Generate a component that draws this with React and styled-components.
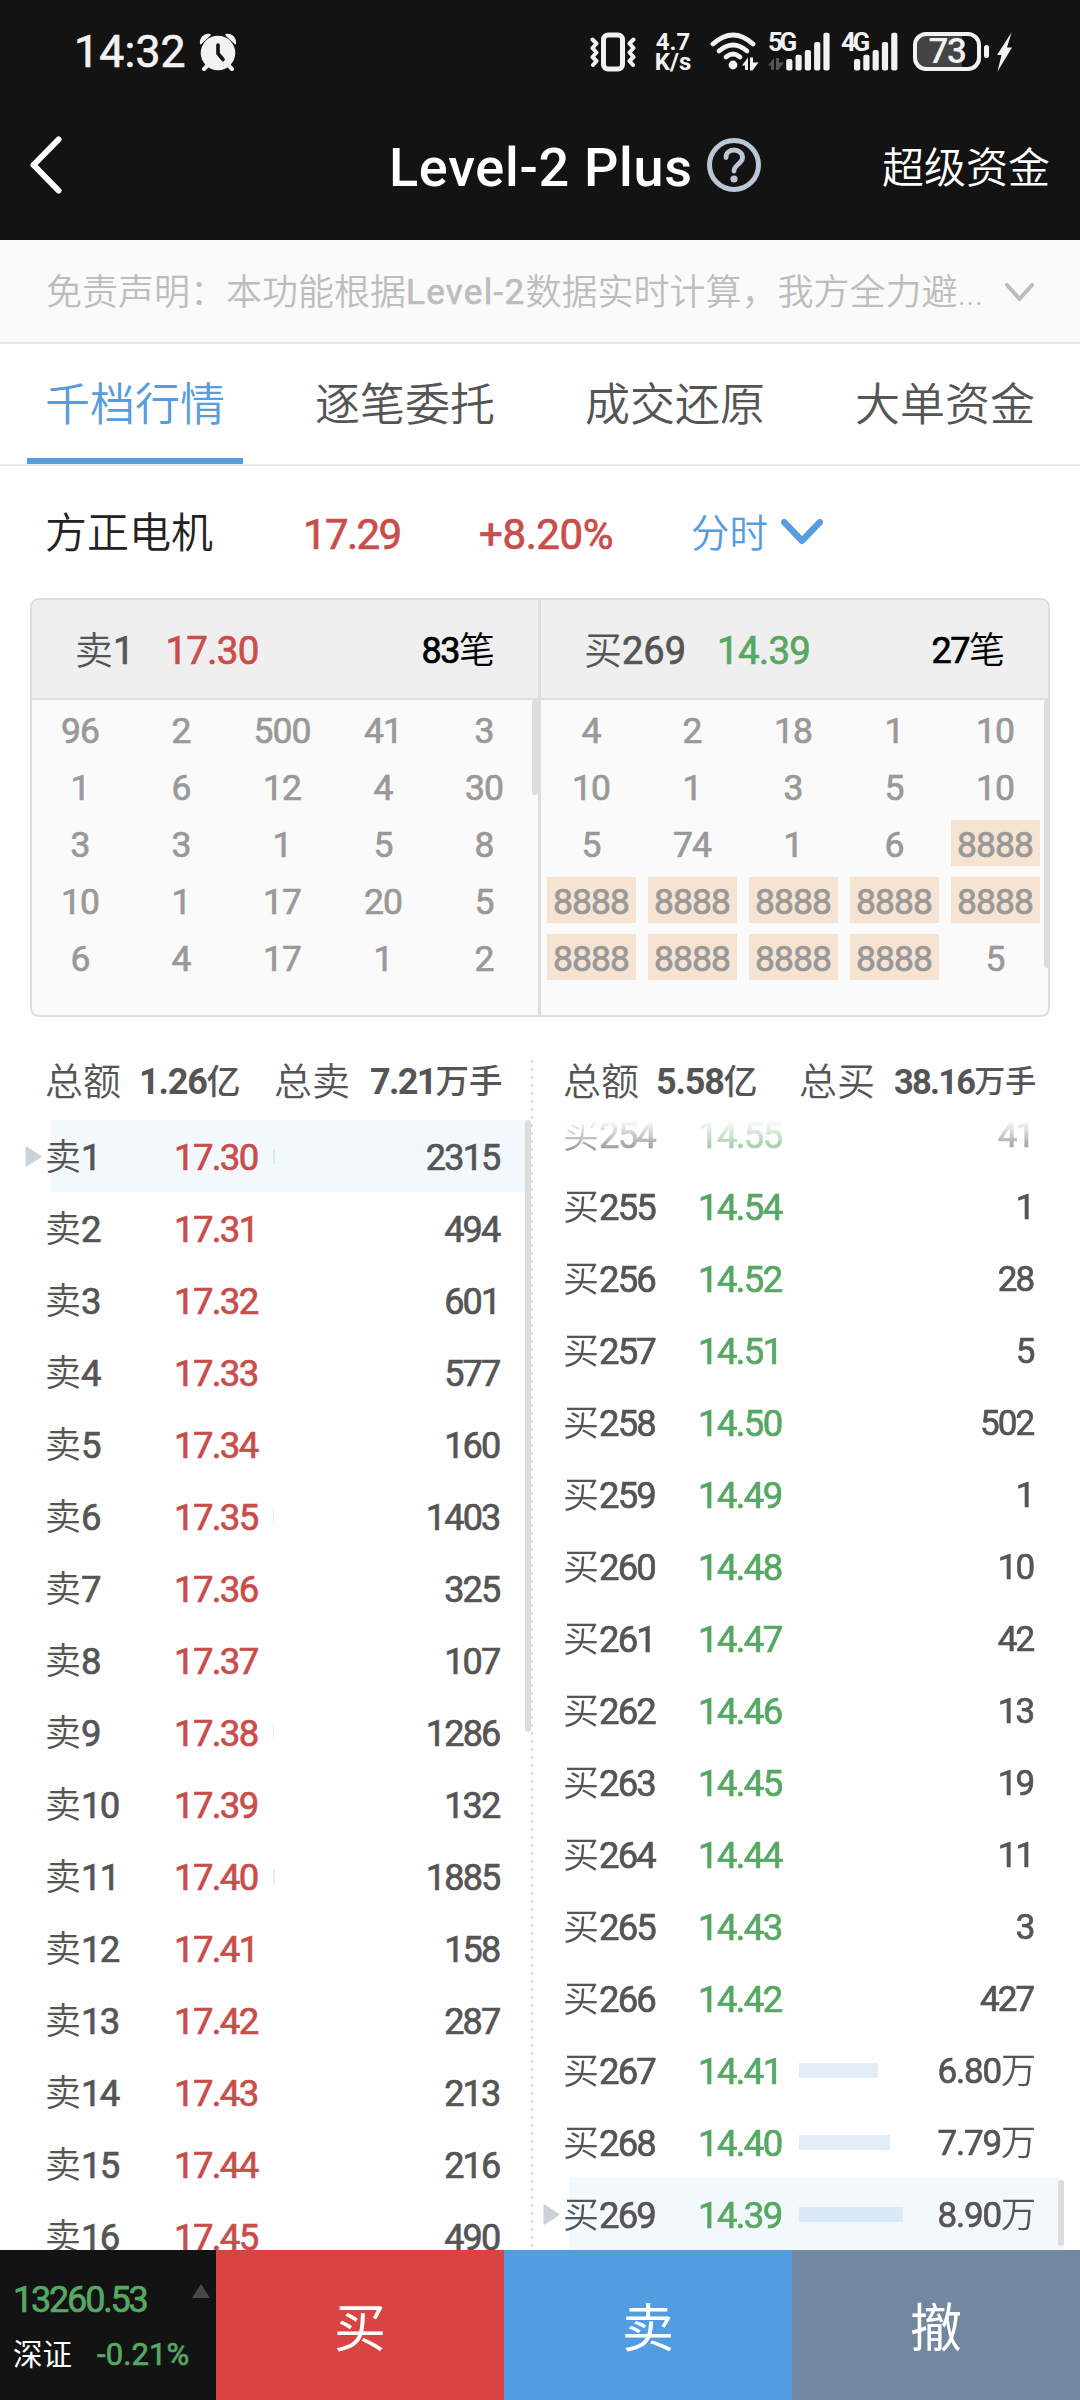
import React from "react";
import styled, { createGlobalStyle } from "styled-components";

const RED = "#c94d4a";
const GREEN = "#56a863";
const BLUE = "#569cde";
const GREY = "#555555";
const LINE = "#dddddd";
const DARK = "#131313";

const GlobalStyle = createGlobalStyle`
  * { box-sizing: border-box; }
  body {
    margin: 0;
    background: #ffffff;
    font-family: Roboto, "Noto Sans CJK SC", sans-serif;
    color: ${GREY};
  }
`;

const Screen = styled.div`
  width: 1080px;
  height: 2400px;
  display: flex;
  flex-direction: column;
  overflow: hidden;
  background: #fefefe;
`;

const Cjk = styled.span`
  font-family: Roboto, "Noto Sans CJK SC", sans-serif;
  font-size: ${(p) => p.$size}px;
  font-weight: ${(p) => p.$weight || 350};
  line-height: 48px;
  color: ${(p) => p.$color || "inherit"};
  white-space: nowrap;
`;

const Num = styled.span`
  font-family: Roboto, sans-serif;
  font-size: ${(p) => p.$size}px;
  font-weight: ${(p) => p.$weight || 400};
  -webkit-text-stroke: ${(p) => (p.$weight ? 0 : 0.7)}px currentColor;
  letter-spacing: ${(p) => p.$track || 0}px;
  line-height: 48px;
  color: ${(p) => p.$color || "inherit"};
  white-space: nowrap;
`;

/* ---------- status bar ---------- */

const StatusBar = styled.div`
  height: 102px;
  flex: none;
  background: ${DARK};
  color: #f2f2f2;
  display: flex;
  align-items: center;
  padding: 1px 68px 0 74px;
`;

const StatusGroup = styled.div`
  display: flex;
  align-items: center;
  margin-left: ${(p) => p.$left || 0}px;
`;

const Speed = styled.div`
  display: flex;
  flex-direction: column;
  align-items: center;
  width: 40px;
  margin-left: 17px;
  margin-right: 1px;
  font: 700 24px/20px Roboto, sans-serif;
`;

const Signal = styled.div`
  display: flex;
  width: 64px;
  height: 40px;
  position: relative;
  margin-left: ${(p) => p.$left}px;
`;

const NetLabel = styled.span`
  position: absolute;
  left: 0;
  top: 0;
  font: 700 26px/20px Roboto, sans-serif;
  letter-spacing: -3.5px;
`;

const Battery = styled.div`
  width: 68px;
  height: 39px;
  margin-left: 8px;
  border: 4px solid #f2f2f2;
  border-radius: 13px;
  background: linear-gradient(90deg, #444444 45px, ${DARK} 45px);
  display: flex;
  align-items: center;
  justify-content: center;
  font: 500 35px/32px Roboto, sans-serif;
  letter-spacing: -1.5px;
`;

const BatteryTip = styled.div`
  width: 5px;
  height: 13px;
  margin-left: 3px;
  border-radius: 3px;
  background: #f2f2f2;
`;

const AlarmIcon = () => (
  <svg width="38" height="38" viewBox="0 0 38 38" fill="none">
    <path d="M10 31 5 36M28 31l5 5" stroke="#f2f2f2" strokeWidth="4" strokeLinecap="round" />
    <path d="M1 11C0 5 5 0 11 1C12 1 12 2 11 3L3 10.500Q1.500 12 1 11z" fill="#f2f2f2" />
    <path d="M37 11C38 5 33 0 27 1C26 1 26 2 27 3L35 10.500Q36.500 12 37 11z" fill="#f2f2f2" />
    <circle cx="19" cy="20" r="17.300" fill="#f2f2f2" />
    <path d="M19 12v8.500l5 6" stroke={DARK} strokeWidth="3.600" strokeLinecap="round" strokeLinejoin="round" />
  </svg>
);

const VibrateIcon = () => (
  <svg width="46" height="40" viewBox="0 0 46 40" fill="none" stroke="#f2f2f2" strokeLinecap="round" strokeLinejoin="round">
    <rect x="13.500" y="3" width="19" height="34" rx="4.500" strokeWidth="5" />
    <path d="M2.500 7.500 6.500 11.500 2.500 16 6.500 20.500 2.500 25 6.500 29 3 33" strokeWidth="4" />
    <path d="M43.500 7.500 39.500 11.500 43.500 16 39.500 20.500 43.500 25 39.500 29 43 33" strokeWidth="4" />
  </svg>
);

const WifiIcon = () => (
  <svg width="50" height="40" viewBox="0 0 50 40" fill="none" stroke="#f2f2f2" strokeLinecap="round">
    <path d="M3 12Q23 -6 43 12" strokeWidth="4.800" />
    <path d="M9 19Q23 7 37 19" strokeWidth="4.800" />
    <path d="M16 25Q23 19 30 25" strokeWidth="4.800" />
    <circle cx="23" cy="33" r="4.400" fill="#f2f2f2" stroke="none" />
    <path d="M32 33.500l6-8v12.500h-3v-4.500zM40 25.500h3v5h5.500L42.500 38.500h-2.500z" fill="#f2f2f2" stroke="none" />
  </svg>
);

const SignalIcon = ({ left, dim }) => (
  <svg width="64" height="40" viewBox="0 0 64 40">
    {dim && <path d="M0 33.500 6 26v12H3v-4.500zM8 26h3v4.500h5L10 38H8z" fill="#555555" />}
    {[27, 22.7, 18, 10, 0.7].map((top, i) => (
      <rect key={i} x={left + i * 9.3} y={top} width="6.200" height={38.6 - top} rx="2" fill="#f2f2f2" />
    ))}
  </svg>
);

const BoltIcon = () => (
  <svg width="15" height="40" viewBox="0 0 15 40" style={{ marginLeft: 8 }}>
    <path d="M14.500 .5 0 23h4.500L.5 39.500 15 15.500H10z" fill="#f2f2f2" />
  </svg>
);

/* ---------- title bar ---------- */

const TitleBar = styled.header`
  height: 138px;
  flex: none;
  background: ${DARK};
  color: #ffffff;
  display: flex;
  align-items: center;
  padding: 0 30px 12px 29px;
`;

const BackIcon = () => (
  <svg width="34" height="58" viewBox="0 0 34 58" fill="none">
    <path d="M29.500 3.500 4.500 29 29.500 54.500" stroke="#ffffff" strokeWidth="6" strokeLinecap="round" strokeLinejoin="round" />
  </svg>
);

const Title = styled.h1`
  margin: 6px 0 0 326px;
  width: 305px;
  font: 500 54px/60px Roboto, sans-serif;
  letter-spacing: 0.7px;
  white-space: nowrap;
`;

const HelpIcon = () => (
  <svg width="56" height="56" viewBox="0 0 56 56" fill="none" style={{ marginLeft: 12 }}>
    <circle cx="28" cy="28" r="24.500" stroke="#bcc7d6" strokeWidth="5" />
    <path d="M20 20.500C20 16 23.500 13 28 13S36.500 16 36.500 20.500C36.500 26.500 28 27.500 28 34" stroke="#bcc7d6" strokeWidth="4.800" strokeLinecap="round" />
    <circle cx="28" cy="42" r="3.600" fill="#bcc7d6" />
  </svg>
);

const TitleAction = styled.div`
  margin-left: auto;
  font: 400 42px/48px "Noto Sans CJK SC", sans-serif;
  font-weight: 350;
`;

/* ---------- disclaimer and tabs ---------- */

const Disclaimer = styled.div`
  height: 104px;
  flex: none;
  background: #fafafa;
  border-bottom: 2px solid #e8e8e8;
  display: flex;
  align-items: center;
  padding: 3px 46px 0;
  color: #bdbdbd;
`;

const Chevron = ({ w, h, stroke, color, left }) => (
  <svg width={w} height={h} viewBox={`0 0 ${w} ${h}`} fill="none" style={{ marginLeft: left }}>
    <path
      d={`M${stroke / 2} ${stroke / 2}L${w / 2} ${h - stroke / 2 - 1}L${w - stroke / 2} ${stroke / 2}`}
      stroke={color}
      strokeWidth={stroke}
      strokeLinecap="round"
      strokeLinejoin="round"
    />
  </svg>
);

const Tabs = styled.nav`
  height: 122px;
  flex: none;
  display: flex;
  border-bottom: 2px solid #e8e8e8;
`;

const Tab = styled.div`
  width: 216px;
  margin: 0 27px;
  border-bottom: 6px solid ${(p) => (p.$active ? BLUE : "transparent")};
  color: ${(p) => (p.$active ? BLUE : GREY)};
  display: flex;
  align-items: center;
  justify-content: center;
  padding-top: 10px;
`;

/* ---------- stock summary ---------- */

const StockRow = styled.section`
  height: 132px;
  flex: none;
  display: flex;
  align-items: center;
  padding-left: 45px;
`;

const Cell = styled.div`
  width: ${(p) => p.$width}px;
  flex: none;
  display: flex;
  align-items: center;
  padding-top: ${(p) => p.$drop || 0}px;
`;

/* ---------- order queue card ---------- */

const QueueCard = styled.section`
  height: 419px;
  flex: none;
  margin: 0 30px;
  border: 2px solid ${LINE};
  border-radius: 9px;
  background: #fafafa;
  display: flex;
`;

const Queue = styled.div`
  position: relative;
  width: ${(p) => p.$width}px;
  border-left: ${(p) => (p.$divided ? 3 : 0)}px solid ${LINE};
`;

const QueueHead = styled.div`
  height: 100px;
  background: #efefef;
  border-bottom: 2px solid ${LINE};
  border-radius: ${(p) => (p.$right ? "0 7px 0 0" : "7px 0 0 0")};
  display: flex;
  align-items: center;
  padding: 3px 43px 0;
`;

const QueuePrice = styled(Num)`
  margin-left: 31px;
`;

const QueueGrid = styled.div`
  display: grid;
  grid-template-columns: repeat(5, 101px);
  grid-auto-rows: 57px;
  place-items: center;
  margin-left: ${(p) => p.$left}px;
`;

const Lot = styled.div`
  width: 89px;
  height: 46px;
  background: ${(p) => (p.$hot ? "#f7e3d1" : "transparent")};
  color: #999999;
  font: 400 35.5px/51px Roboto, sans-serif;
  -webkit-text-stroke: 0.7px currentColor;
  letter-spacing: -1px;
  text-indent: -1px;
  text-align: center;
`;

const ScrollThumb = styled.div`
  position: absolute;
  top: ${(p) => p.$top}px;
  right: ${(p) => p.$right}px;
  width: 6px;
  height: ${(p) => p.$height}px;
  border-radius: 3px;
  background: #dcdcdc;
`;

/* ---------- depth book ---------- */

const Book = styled.section`
  height: 1233px;
  flex: none;
  display: flex;
`;

const Side = styled.div`
  position: relative;
  width: ${(p) => p.$width}px;
  display: flex;
  flex-direction: column;
`;

const Totals = styled.div`
  height: 103px;
  flex: none;
  display: flex;
  align-items: center;
  padding: 26px 0 0 ${(p) => p.$left}px;
`;

const Divider = styled.div`
  width: 2px;
  margin-top: 43px;
  background: repeating-linear-gradient(180deg, ${LINE} 0 3px, transparent 3px 8px);
`;

const Rows = styled.div`
  flex: 1;
  overflow: hidden;
  mask-image: ${(p) => (p.$fade ? "linear-gradient(180deg, transparent 0, #000 50px)" : "none")};
`;

const RowShift = styled.div`
  margin-top: ${(p) => p.$offset}px;
`;

const Row = styled.div`
  height: 72px;
  display: flex;
  align-items: center;
  margin-right: ${(p) => p.$right}px;
  padding-right: ${(p) => p.$pad}px;
  background: ${(p) =>
    p.$active ? `linear-gradient(90deg, transparent ${p.$start}px, #f3f8fd ${p.$start}px)` : "transparent"};
`;

const Pointer = styled.div`
  width: ${(p) => p.$width}px;
  flex: none;
  display: flex;
  justify-content: flex-end;
  padding-right: 3px;
`;

const PointerIcon = () => (
  <svg width="17" height="21" viewBox="0 0 17 21">
    <path d="M1.500 1.500 15.500 10.500 1.500 19.500z" fill="#cad2da" stroke="#cad2da" strokeWidth="2" strokeLinejoin="round" />
  </svg>
);

const VolumeBar = styled.div`
  height: 15px;
  background: ${(p) => (p.$active ? "#d9e9f6" : "#e2edf8")};
`;

const Volume = styled.div`
  margin-left: auto;
  display: flex;
  align-items: center;
  padding-top: ${(p) => p.$drop || 0}px;
`;

/* ---------- bottom bar ---------- */

const BottomBar = styled.footer`
  height: 150px;
  flex: none;
  display: flex;
`;

const IndexPanel = styled.div`
  position: relative;
  width: 216px;
  background: ${DARK};
  padding: 25px 0 0 13px;
`;

const IndexLine = styled.div`
  display: flex;
  align-items: center;
  height: ${(p) => p.$height}px;
`;

const ExpandMark = styled.svg`
  position: absolute;
  left: 192px;
  top: 34px;
`;

const TradeButton = styled.div`
  width: 288px;
  background: ${(p) => p.$bg};
  color: #ffffff;
  display: flex;
  align-items: center;
  justify-content: center;
  font: 400 52px/60px "Noto Sans CJK SC", sans-serif;
`;

const sellQueue = [96, 2, 500, 41, 3, 1, 6, 12, 4, 30, 3, 3, 1, 5, 8, 10, 1, 17, 20, 5, 6, 4, 17, 1, 2];
const buyQueue = [4, 2, 18, 1, 10, 10, 1, 3, 5, 10, 5, 74, 1, 6, 8888, 8888, 8888, 8888, 8888, 8888, 8888, 8888, 8888, 8888, 5];

const sellVolumes = [2315, 494, 601, 577, 160, 1403, 325, 107, 1286, 132, 1885, 158, 287, 213, 216, 490];
const sellRows = sellVolumes.map((volume, i) => ({
  level: i + 1,
  price: (17.3 + i * 0.01).toFixed(2),
  volume,
  active: i === 0,
}));

const buyRows = [
  [254, "14.55", 41], [255, "14.54", 1], [256, "14.52", 28], [257, "14.51", 5],
  [258, "14.50", 502], [259, "14.49", 1], [260, "14.48", 10], [261, "14.47", 42],
  [262, "14.46", 13], [263, "14.45", 19], [264, "14.44", 11], [265, "14.43", 3],
  [266, "14.42", 427], [267, "14.41", 68000], [268, "14.40", 77900], [269, "14.39", 89000],
].map(([level, price, volume]) => ({ level, price, volume, active: level === 269 }));

const barWidth = (volume) => Math.floor((volume / 89000) * 104);

function VolumeText({ volume, size, track }) {
  if (volume < 10000) return <Num $size={size} $track={track}>{volume}</Num>;
  return (
    <>
      <Num $size={size} $track={-1.2}>{(volume / 10000).toFixed(2)}</Num>
      <Cjk $size={35}>万</Cjk>
    </>
  );
}

function BookRow({ row, label, color, pointerWidth, labelWidth, barOffset, right, pad, start, size }) {
  return (
    <Row $active={row.active} $right={right} $pad={pad} $start={start}>
      <Pointer $width={pointerWidth}>{row.active && <PointerIcon />}</Pointer>
      <Cell $width={labelWidth} $drop={4}>
        <Cjk $size={36}>{label}</Cjk>
        <Num $size={36.5} $track={-1.9}>{row.level}</Num>
      </Cell>
      <Cell $width={barOffset} $drop={4}>
        <Num $size={36.5} $track={-1.6} $color={color}>{row.price}</Num>
      </Cell>
      <VolumeBar $active={row.active} style={{ width: barWidth(row.volume) }} />
      <Volume $drop={row.volume < 10000 ? 4 : 3}>
        <VolumeText volume={row.volume} size={size} track={-1.8} />
      </Volume>
    </Row>
  );
}

function QueueSide({ side, level, price, color, count, lots, width, right }) {
  return (
    <Queue $width={width} $divided={right}>
      <QueueHead $right={right}>
        <Cjk $size={38}>{side}</Cjk>
        <Num $size={38}>{level}</Num>
        <QueuePrice $size={38.5} $track={-0.7} $color={color}>{price}</QueuePrice>
        <Volume>
          <Num $size={36} $color="#000" $track={-1.5}>{count}</Num>
          <Cjk $size={36} $color="#000">笔</Cjk>
        </Volume>
      </QueueHead>
      <QueueGrid $left={right ? 0 : -2}>
        {lots.map((lot, i) => (
          <Lot key={i} $hot={lot === 8888}>{lot}</Lot>
        ))}
      </QueueGrid>
      <ScrollThumb $top={100} $height={right ? 268 : 95} $right={right ? -2 : 0} />
    </Queue>
  );
}

export default function App() {
  return (
    <Screen>
      <GlobalStyle />
      <StatusBar>
        <Num $size={44.5} $track={0.2}>14:32</Num>
        <StatusGroup $left={13}><AlarmIcon /></StatusGroup>
        <StatusGroup style={{ marginLeft: "auto" }}>
          <VibrateIcon />
          <Speed><span>4.7</span><span>K/s</span></Speed>
          <StatusGroup $left={16}><WifiIcon /></StatusGroup>
          <Signal $left={8}>
            <NetLabel>5G</NetLabel>
            <SignalIcon left={18.2} dim />
          </Signal>
          <Signal $left={9}>
            <NetLabel>4G</NetLabel>
            <SignalIcon left={13} />
          </Signal>
          <Battery>73</Battery>
          <BatteryTip />
          <BoltIcon />
        </StatusGroup>
      </StatusBar>

      <TitleBar>
        <BackIcon />
        <Title>Level-2 Plus</Title>
        <HelpIcon />
        <TitleAction>超级资金</TitleAction>
      </TitleBar>

      <Disclaimer>
        <Cjk $size={36}>免责声明：本功能根据</Cjk>
        <Num $size={35} $track={1.3}>Level-2</Num>
        <Cjk $size={36}>数据实时计算，我方全力避...</Cjk>
        <Chevron w={29} h={19} stroke={4} color="#bdbdbd" left="auto" />
      </Disclaimer>

      <Tabs>
        <Tab $active><Cjk $size={45}>千档行情</Cjk></Tab>
        <Tab><Cjk $size={45}>逐笔委托</Cjk></Tab>
        <Tab><Cjk $size={45}>成交还原</Cjk></Tab>
        <Tab><Cjk $size={45}>大单资金</Cjk></Tab>
      </Tabs>

      <StockRow>
        <Cell $width={258} $drop={4}><Cjk $size={42} $color="#222">方正电机</Cjk></Cell>
        <Cell $width={176} $drop={5}><Num $size={42} $track={-1.6} $color={RED}>17.29</Num></Cell>
        <Cell $width={212} $drop={5}><Num $size={42} $track={-0.4} $color={RED}>+8.20%</Num></Cell>
        <Cell $width={77} $drop={4}><Cjk $size={38.5} $color={BLUE}>分时</Cjk></Cell>
        <Chevron w={42} h={26} stroke={6.5} color={BLUE} left={13} />
      </StockRow>

      <QueueCard>
        <QueueSide side="卖" level="1" price="17.30" color={RED} count="83" lots={sellQueue} width={506} />
        <QueueSide side="买" level="269" price="14.39" color={GREEN} count="27" lots={buyQueue} width={510} right />
      </QueueCard>

      <Book>
        <Side $width={531}>
          <Totals $left={45}>
            <Cell $width={94}><Cjk $size={38}>总额</Cjk></Cell>
            <Cell $width={135}>
              <Num $size={36} $weight={700} $track={-1.2}>1.26</Num>
              <Cjk $size={34} $weight={500}>亿</Cjk>
            </Cell>
            <Cell $width={96}><Cjk $size={38}>总卖</Cjk></Cell>
            <Num $size={36} $weight={700} $track={-1.7}>7.21</Num>
            <Cjk $size={33.5} $weight={500}>万手</Cjk>
          </Totals>
          <Rows>
            {sellRows.map((row) => (
              <BookRow
                key={row.level}
                row={row}
                label="卖"
                color={RED}
                pointerWidth={45}
                labelWidth={129}
                barOffset={99}
                right={0}
                pad={31.5}
                start={51}
                size={36}
              />
            ))}
          </Rows>
          <ScrollThumb $top={103} $height={612} $right={0} />
        </Side>
        <Divider />
        <Side $width={547}>
          <Totals $left={30}>
            <Cell $width={93}><Cjk $size={38}>总额</Cjk></Cell>
            <Cell $width={143}>
              <Num $size={36} $weight={700} $track={-1.2}>5.58</Num>
              <Cjk $size={34} $weight={500}>亿</Cjk>
            </Cell>
            <Cell $width={95}><Cjk $size={38}>总买</Cjk></Cell>
            <Num $size={34.5} $weight={700} $track={-1.8}>38.16</Num>
            <Cjk $size={31} $weight={500}>万手</Cjk>
          </Totals>
          <Rows $fade>
            <RowShift $offset={-22}>
              {buyRows.map((row) => (
                <BookRow
                  key={row.level}
                  row={row}
                  label="买"
                  color={GREEN}
                  pointerWidth={30}
                  labelWidth={135}
                  barOffset={101}
                  right={16}
                  pad={row.volume < 10000 ? 30.5 : 28}
                  start={36}
                  size={35}
                />
              ))}
            </RowShift>
          </Rows>
          <ScrollThumb $top={1163} $height={66} $right={16} />
        </Side>
      </Book>

      <BottomBar>
        <IndexPanel>
          <IndexLine $height={50}>
            <Num $size={36} $track={-2.2} $color={GREEN}>13260.53</Num>
          </IndexLine>
          <IndexLine $height={59}>
            <Cell $width={84}><Cjk $size={29.5} $weight={400} $color="#fff">深证</Cjk></Cell>
            <Num $size={31} $track={0.1} $color={GREEN}>-0.21%</Num>
          </IndexLine>
          <ExpandMark width="18" height="14" viewBox="0 0 18 14">
            <path d="M9 0 18 14H0z" fill="#484848" />
          </ExpandMark>
        </IndexPanel>
        <TradeButton $bg="#d94442">买</TradeButton>
        <TradeButton $bg="#529ce2">卖</TradeButton>
        <TradeButton $bg="#7487a0">撤</TradeButton>
      </BottomBar>
    </Screen>
  );
}
